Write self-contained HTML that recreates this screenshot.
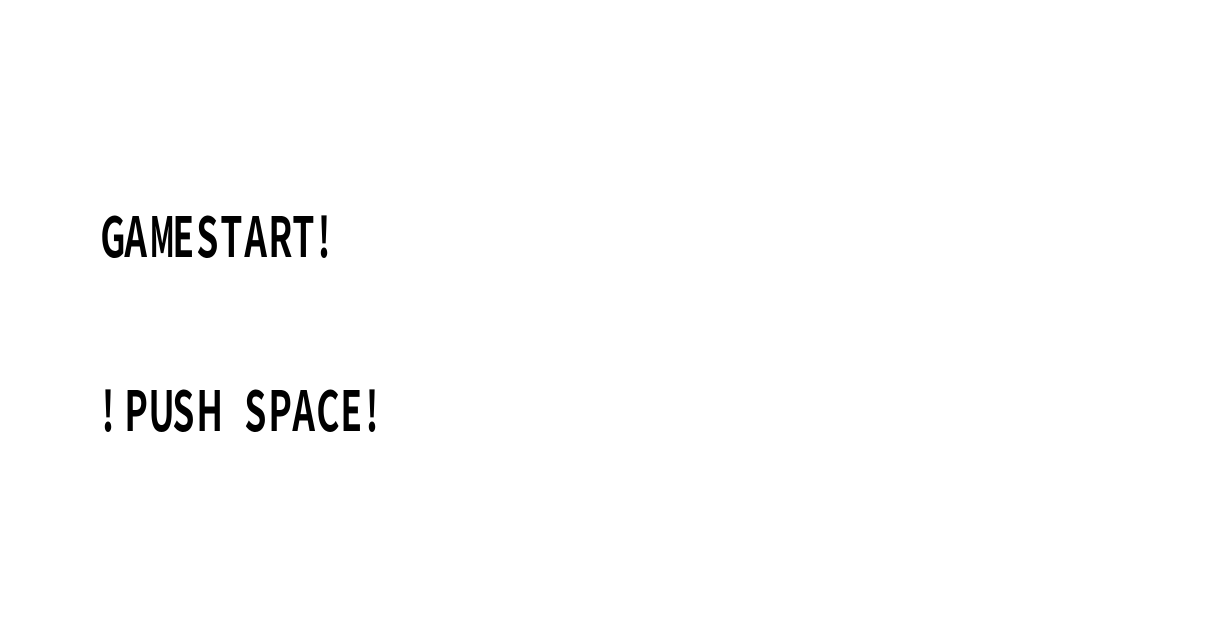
<!DOCTYPE html>
<html><head><meta charset="utf-8"><style>
html,body{margin:0;padding:0;background:#fff;width:1216px;height:640px;overflow:hidden}
.l{position:absolute;left:96px;font-family:"Noto Sans CJK JP","Liberation Sans",sans-serif;font-weight:700;font-size:55px;line-height:55px;color:#000;white-space:nowrap}
.l span{display:inline-block;width:24px;text-align:center;transform:scaleX(0.64)}
.l span.m{transform:scaleX(0.54)}
</style></head><body>
<div class="l" style="top:206px"><span>G</span><span>A</span><span class="m">M</span><span>E</span><span>S</span><span>T</span><span>A</span><span>R</span><span>T</span><span>!</span></div>
<div class="l" style="top:380px"><span>!</span><span>P</span><span>U</span><span>S</span><span>H</span><span> </span><span>S</span><span>P</span><span>A</span><span>C</span><span>E</span><span>!</span></div>
</body></html>
